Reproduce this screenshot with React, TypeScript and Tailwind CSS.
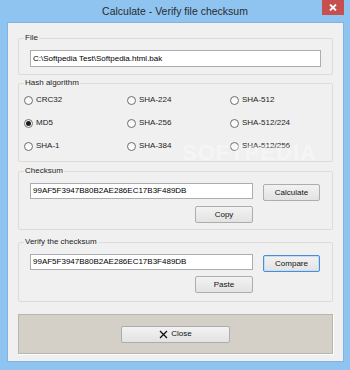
import React, { useState } from 'react';

const algos = [
  ['CRC32', 'SHA-224', 'SHA-512'],
  ['MD5', 'SHA-256', 'SHA-512/224'],
  ['SHA-1', 'SHA-384', 'SHA-512/256'],
];

const Radio: React.FC<{ label: string; checked: boolean; onClick: () => void }> = ({ label, checked, onClick }) => (
  <div className="flex items-center h-[12px] cursor-default" onClick={onClick}>
    <span className="w-[9px] h-[9px] rounded-full border border-[#6f6f6f] bg-gradient-to-b from-[#f4f4f4] to-white flex items-center justify-center">
      {checked && <span className="w-[5px] h-[5px] rounded-full bg-[#1a1a1a]" />}
    </span>
    <span className="ml-[3px] text-[8px] leading-[10px] text-[#1e1e1e]">{label}</span>
  </div>
);

const Btn: React.FC<{ children: React.ReactNode; className?: string; focused?: boolean }> = ({ children, className, focused }) => (
  <button
    className={`h-[17px] text-[8px] leading-[10px] text-[#111] bg-gradient-to-b from-[#f2f2f2] to-[#e3e3e3] rounded-[2px] border flex items-center justify-center ${focused ? 'border-[#4a8fd6] shadow-[inset_0_0_0_1px_#c4dcf5]' : 'border-[#adadad]'} ${className || ''}`}
  >
    {children}
  </button>
);

// group box: legend sits on the top border, padding goes on the inner div
const Group: React.FC<{ title: string; children: React.ReactNode; className?: string; inner?: string }> = ({ title, children, className, inner }) => (
  <fieldset className={`mx-[10px] border border-[#dcdcdc] rounded-[2px] ${className || ''}`}>
    <legend className="ml-[5px] px-[1px] text-[8px] leading-[10px] text-[#1e1e1e]">{title}</legend>
    <div className={inner}>{children}</div>
  </fieldset>
);

const Field: React.FC<{ value: string; className?: string }> = ({ value, className }) => (
  <div className={`h-[16px] bg-white border border-[#abadb3] flex items-center px-[2px] text-[8px] leading-[10px] text-black whitespace-nowrap overflow-hidden ${className || ''}`}>
    {value}
  </div>
);

export default function App() {
  const [algo, setAlgo] = useState('MD5');
  const sum = '99AF5F3947B80B2AE286EC17B3F489DB';

  return (
    <div className="relative w-[350px] h-[370px] bg-[#8fc4f1] flex flex-col overflow-hidden" style={{ fontFamily: '"Liberation Sans", Arial, sans-serif' }}>
      <div className="relative h-[22px] flex items-center justify-center">
        <span className="text-[10.5px] text-[#2b2b2b] mt-[2px]">Calculate - Verify file checksum</span>
        <div className="absolute top-0 right-[6px] w-[22px] h-[15px] bg-[#c7504f] flex items-center justify-center">
          <svg width="8" height="7" viewBox="0 0 8 7">
            <path d="M1 0.5 L7 6.5 M7 0.5 L1 6.5" stroke="white" strokeWidth="1.8" />
          </svg>
        </div>
      </div>

      <div className="mx-[6px] ml-[7px] h-[340px] bg-[#f0f0f0] border border-[#7fb3e4] flex flex-col">
        <Group title="File" className="mt-[10px]" inner="px-[11px] pt-[7px] pb-[7px]">
          <Field value="C:\Softpedia Test\Softpedia.html.bak" className="h-[17px]" />
        </Group>

        <Group title="Hash algorithm" className="mt-[3px]" inner="pl-[5px] pt-[6px] pb-[9px]">
          <div className="grid grid-cols-[103px_103px_100px] gap-y-[11px]">
            {algos.flat().map((a) => (
              <Radio key={a} label={a} checked={algo === a} onClick={() => setAlgo(a)} />
            ))}
          </div>
        </Group>

        <Group title="Checksum" className="mt-[4px]" inner="pl-[11px] pr-[12px] pt-[7px] pb-[6px]">
          <div className="flex items-start">
            <Field value={sum} className="w-[223px]" />
            <Btn className="ml-[10px] mt-[1px] w-[57px]">Calculate</Btn>
          </div>
          <div className="w-[223px] flex justify-end mt-[5px]">
            <Btn className="w-[58px]">Copy</Btn>
          </div>
        </Group>

        <Group title="Verify the checksum" className="mt-[7px]" inner="pl-[11px] pr-[12px] pt-[7px] pb-[8px]">
          <div className="flex items-start">
            <Field value={sum} className="w-[223px]" />
            <Btn focused className="ml-[10px] mt-[1px] w-[57px]">Compare</Btn>
          </div>
          <div className="w-[223px] flex justify-end mt-[4px]">
            <Btn className="w-[58px]">Paste</Btn>
          </div>
        </Group>

        <div className="mx-[10px] mt-[12px] h-[40px] bg-[#d4d0c8] border border-[#b9b6ae] shadow-[1px_1px_0_0_#ffffff] flex items-center justify-center">
          <Btn className="w-[109px] gap-[3px]">
            <svg width="9" height="9" viewBox="0 0 9 9">
              <path d="M1 1 L8 8 M8 1 L1 8" stroke="#111" strokeWidth="1.3" />
            </svg>
            <span>Close</span>
          </Btn>
        </div>
      </div>

      <div className="absolute left-[182px] top-[136px] text-[22px] font-bold tracking-[1px] text-white/40 pointer-events-none select-none">
        SOFTPEDIA
      </div>
    </div>
  );
}
